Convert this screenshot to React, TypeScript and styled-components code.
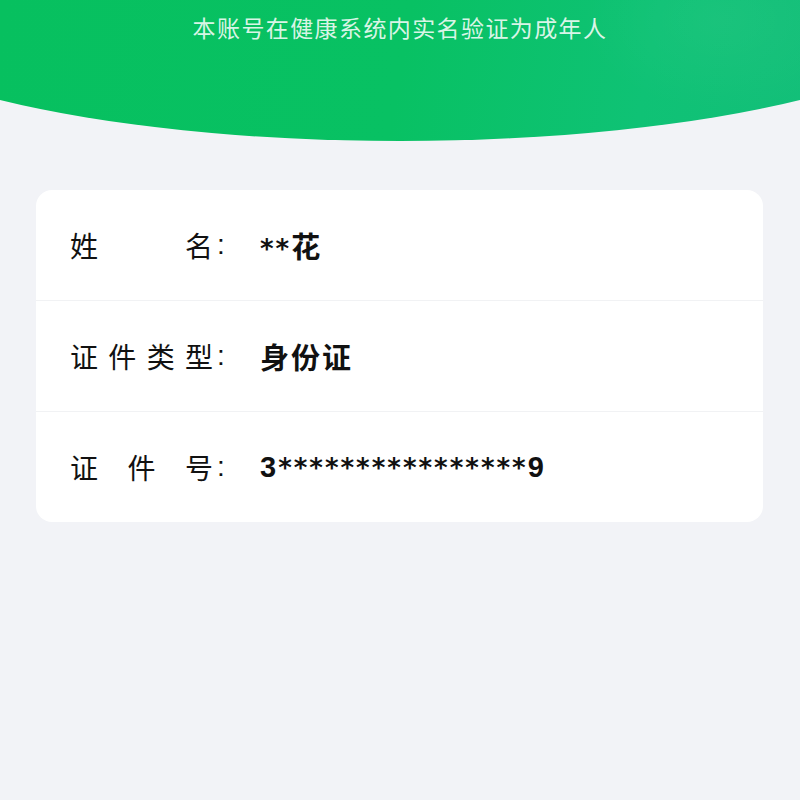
import React from "react";
import styled, { createGlobalStyle } from "styled-components";

const GlobalStyle = createGlobalStyle`
  html, body {
    margin: 0;
    padding: 0;
    background: #f2f3f7;
  }
  body {
    font-family: "Liberation Sans", "Noto Sans CJK SC", sans-serif;
  }
`;

const Page = styled.div`
  width: 800px;
  min-height: 800px;
  background: #f2f3f7;
  display: flex;
  flex-direction: column;
`;

const Header = styled.header`
  height: 141px;
  background:
    radial-gradient(ellipse 200px 130px at 720px 20px, rgba(255, 255, 255, 0.04), rgba(255, 255, 255, 0) 70%),
    linear-gradient(100deg, #07c05f 0%, #08c163 50%, #0fc275 80%, #13bf79 100%);
  clip-path: ellipse(567px 141px at 50% 0);
  display: flex;
  justify-content: center;
`;

const Notice = styled.p`
  margin: 0;
  padding-top: 11px;
  font-family: "Noto Sans CJK SC", sans-serif;
  font-size: 23px;
  line-height: 32px;
  letter-spacing: 1.4px;
  color: rgba(255, 255, 255, 0.86);
`;

const Card = styled.section`
  margin: 49px 37px 0 36px;
  background: #ffffff;
  border-radius: 16px;
  overflow: hidden;
`;

const Row = styled.div`
  height: 110px;
  display: flex;
  align-items: center;
  padding-left: 34px;
  & + & {
    border-top: 1px solid #f1f2f4;
  }
`;

const LabelCol = styled.div`
  width: 190px;
  display: flex;
  align-items: center;
  font-family: "Noto Sans CJK SC", sans-serif;
  font-size: 28px;
  color: #111111;
`;

const LabelChars = styled.span`
  width: 143px;
  display: flex;
  justify-content: space-between;
`;

const Colon = styled.span`
  margin-left: 4px;
  font-family: "Liberation Sans", sans-serif;
`;

const Value = styled.span`
  font-family: "Liberation Sans", "Noto Sans CJK SC", sans-serif;
  font-weight: 700;
  font-size: 29px;
  letter-spacing: 2px;
  color: #111111;
`;

const Mask = styled.span`
  font-family: "DejaVu Sans", sans-serif;
  font-weight: 700;
  font-size: 26px;
`;

const rows = [
  { label: "姓名", value: "**花" },
  { label: "证件类型", value: "身份证" },
  { label: "证件号", value: "3****************9" },
];

function renderValue(v: string) {
  return v.split(/(\*+)/).map((part, i) =>
    part.startsWith("*") ? <Mask key={i}>{part}</Mask> : <React.Fragment key={i}>{part}</React.Fragment>
  );
}

export default function App() {
  return (
    <Page>
      <GlobalStyle />
      <Header>
        <Notice>本账号在健康系统内实名验证为成年人</Notice>
      </Header>
      <Card>
        {rows.map((r) => (
          <Row key={r.label}>
            <LabelCol>
              <LabelChars>
                {r.label.split("").map((c, i) => (
                  <span key={i}>{c}</span>
                ))}
              </LabelChars>
              <Colon>:</Colon>
            </LabelCol>
            <Value>{renderValue(r.value)}</Value>
          </Row>
        ))}
      </Card>
    </Page>
  );
}
